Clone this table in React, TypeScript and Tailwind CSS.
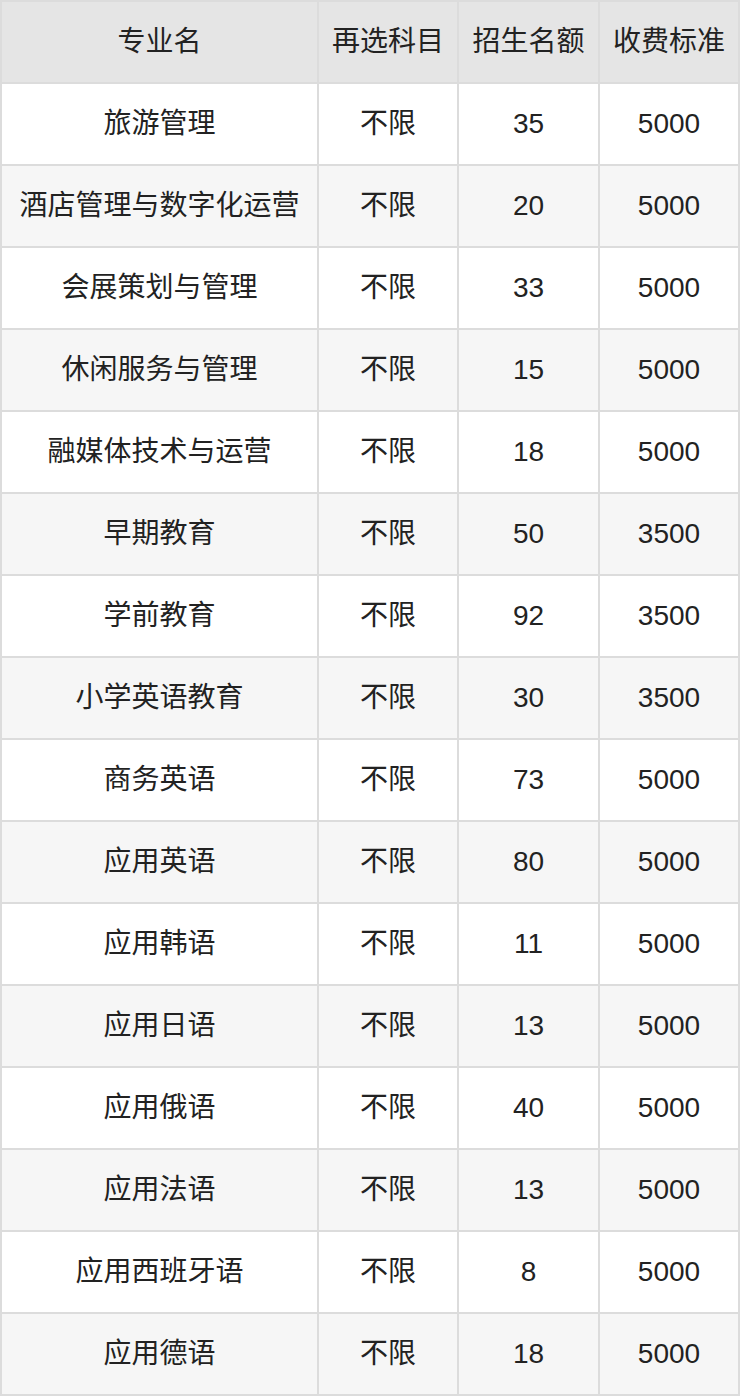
const HEAD = ["专业名", "再选科目", "招生名额", "收费标准"];

const ROWS: [string, string, string, string][] = [
  ["旅游管理", "不限", "35", "5000"],
  ["酒店管理与数字化运营", "不限", "20", "5000"],
  ["会展策划与管理", "不限", "33", "5000"],
  ["休闲服务与管理", "不限", "15", "5000"],
  ["融媒体技术与运营", "不限", "18", "5000"],
  ["早期教育", "不限", "50", "3500"],
  ["学前教育", "不限", "92", "3500"],
  ["小学英语教育", "不限", "30", "3500"],
  ["商务英语", "不限", "73", "5000"],
  ["应用英语", "不限", "80", "5000"],
  ["应用韩语", "不限", "11", "5000"],
  ["应用日语", "不限", "13", "5000"],
  ["应用俄语", "不限", "40", "5000"],
  ["应用法语", "不限", "13", "5000"],
  ["应用西班牙语", "不限", "8", "5000"],
  ["应用德语", "不限", "18", "5000"],
];

export default function App() {
  return (
    <div
      className="w-[740px] bg-white text-[28px] leading-none text-[#222]"
      style={{ fontFamily: '"Liberation Sans", "Noto Sans CJK SC", sans-serif' }}
    >
      <div className="grid grid-cols-[315px_138px_139px_138px] auto-rows-[80px] gap-[2px] border-2 border-[#dcdcdc] bg-[#dcdcdc]">
        {HEAD.map((h) => (
          <div key={h} className="flex items-center justify-center bg-[#e5e5e5]">
            {h}
          </div>
        ))}
        {ROWS.map((row, i) =>
          row.map((cell, j) => (
            <div
              key={`${i}-${j}`}
              className={`flex items-center justify-center ${i % 2 === 1 ? "bg-[#f6f6f6]" : "bg-white"}`}
            >
              {cell}
            </div>
          )),
        )}
      </div>
    </div>
  );
}
